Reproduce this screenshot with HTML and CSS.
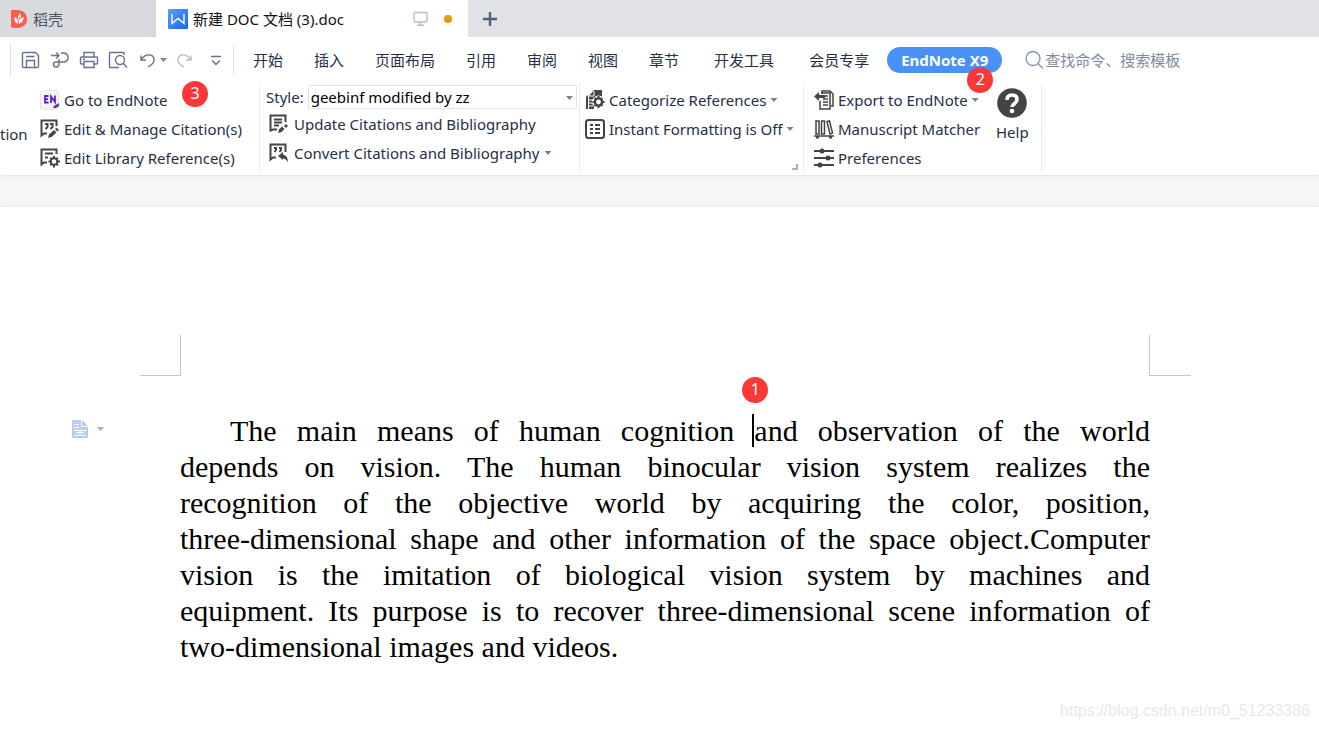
FILE: index.html
```html
<!DOCTYPE html>
<html lang="zh-CN">
<head>
<meta charset="utf-8">
<title>新建 DOC 文档 (3).doc</title>
<link rel="stylesheet" href="styles.css">
</head>
<body>
<div class="app">
<header class="tabbar">
  <button class="tab home-tab">
    <svg width="16" height="18" viewBox="0 0 16 18"><path d="M0 0h7q9 1 9 9t-9 9H2q-2 0-2-2z" fill="#ff5c4c"/><path d="M7 14C3 12 3 8 4 7q2 1 3 4Q6 7 9 3q2 3 0 7 1-2 4-3-1 6-6 7z" fill="#fff"/><path d="M7 14q0-4 2-7" stroke="#ff5c4c" fill="none"/></svg>
    稻壳
  </button>
  <div class="tab doc-tab">
    <svg width="20" height="20" viewBox="0 0 20 20"><defs><linearGradient id="w" x1="0" y1="0" x2="1" y2="1"><stop offset="0" stop-color="#5a9cff"/><stop offset="1" stop-color="#1768e8"/></linearGradient></defs><rect width="20" height="20" rx="1" fill="url(#w)"/><path d="M4 5v9.500l6-5 6 5V5" fill="none" stroke="#fff" stroke-width="1.400"/></svg>
    <span class="doc-name">新建 DOC 文档 (3).doc</span>
    <svg width="16" height="16" viewBox="0 0 16 16" fill="none" stroke="#b4bccf" stroke-width="1.400"><rect x="1" y="1.500" width="13" height="9.500" rx="1"/><path d="M7.500 11v3M4 14.300h7"/></svg>
    <span class="dirty-dot"></span>
  </div>
  <button class="new-tab" aria-label="新建"><svg width="16" height="16" viewBox="0 0 16 16"><path d="M8 1v14M1 8h14" stroke="#525f80" stroke-width="2.400"/></svg></button>
</header>

<nav class="menubar">
  <div class="quick">
    <button aria-label="保存"><svg width="20" height="20" viewBox="0 0 20 20"><path d="M1.500 3.500q0-1 1-1h12l3 3v11q0 1-1 1h-14q-1 0-1-1zM5.500 17v-6.500h8V17M5 6.500h8.500"/></svg></button>
    <button aria-label="输出"><svg width="20" height="20" viewBox="0 0 20 20"><path d="M1 5.500h8M6 2.500l3 3-3 3M11 3h2q5 0 5 4.500T13 12H6q-2.500 0-2.500 2.500T6 17q3 0 3-3V9"/></svg></button>
    <button aria-label="打印"><svg width="20" height="20" viewBox="0 0 20 20"><path d="M5 7V2.500h10V7M5 14H2.500q-1 0-1-1V8q0-1 1-1h15q1 0 1 1v5q0 1-1 1H15M5 11.500h10v6H5zM4 9.300h2"/></svg></button>
    <button aria-label="打印预览"><svg width="20" height="20" viewBox="0 0 20 20"><path d="M16 5V2.500H2q-.5 0-.5.500v14q0 .5.500.5h9"/><circle cx="12" cy="10" r="4.500"/><path d="M15 13l4 4.500"/></svg></button>
    <button class="undo" aria-label="撤销"><svg width="17" height="20" viewBox="0 0 17 20"><path d="M2 5.500V10h5M2 10q4-6 9-5 4.500 1 4 5.500-.5 3.500-6 6.500"/></svg><i class="arrow"></i></button>
    <button class="dim" aria-label="恢复"><svg width="17" height="20" viewBox="0 0 17 20"><path d="M15 5.500V10h-5M15 10Q11 4 6 5q-4.500 1-4 5.500.5 3.500 6 6.500"/></svg></button>
    <button class="more" aria-label="更多"><svg width="12" height="20" viewBox="0 0 12 20"><path d="M1 6.500h10M2 10.500l4 4 4-4"/></svg></button>
  </div>
  <div class="menus">
    <button>开始</button><button>插入</button><button>页面布局</button><button>引用</button><button>审阅</button><button>视图</button><button>章节</button><button class="wide">开发工具</button><button class="wide">会员专享</button>
  </div>
  <button class="active-menu">EndNote X9<span class="badge on-menu">2</span></button>
  <label class="search">
    <svg width="20" height="20" viewBox="0 0 20 20" fill="none" stroke="#8794b0" stroke-width="1.400"><circle cx="9" cy="8.500" r="7"/><path d="M14 13.500l5 5"/></svg>
    <input type="text" placeholder="查找命令、搜索模板" aria-label="查找命令、搜索模板">
  </label>
</nav>

<section class="ribbon">
  <span class="cut-label">tion</span>
  <div class="group cite">
    <button><svg width="20" height="20" viewBox="0 0 20 20"><rect x=".5" y=".5" width="18" height="19" rx="3" fill="#f5f5f7" stroke="#e3e3e8"/><path d="M8.500 6H5v6.500h3.500M5 9.200h3M11 13V6.500l4 5.500V5.500" fill="none" stroke="#5a21d6" stroke-width="1.800"/><path d="M13 18l1-2 5-3v3l-3 2z" fill="#5b2bb5"/></svg>Go to EndNote<span class="badge on-goto">3</span></button>
    <button><svg class="ico" width="20" height="20" viewBox="0 0 20 20"><path d="M7 14.500H4l-2.500 2v-15h15V7"/><path d="M5 5h2.500v3L5.500 10M10 5h2.500v3l-2 2" stroke-width="2"/><path d="M8 19l1-3.500 5-4.500 2.500 2.500-5 4.500zM15 10l1.500-1.500L19 11l-1.500 1.500z" class="fill"/></svg>Edit &amp; Manage Citation(s)</button>
    <button><svg class="ico" width="20" height="20" viewBox="0 0 20 20"><path d="M7 14.500H4l-2.500 2v-15h15V6M5 5.500h8M5 9.500h3"/><circle cx="14" cy="13.500" r="3.300"/><path d="M14 8v2M14 17v2.500M8.500 13.500h2M17.500 13.500H20M10.200 9.700l1.300 1.300M16.500 16l1.400 1.400M17.800 9.700L16.500 11M11.500 16l-1.300 1.300"/></svg>Edit Library Reference(s)</button>
  </div>
  <div class="group biblio">
    <div class="style-row"><label for="style">Style:</label><span class="select-wrap"><select id="style"><option>geebinf modified by zz</option></select><i class="arrow"></i></span></div>
    <button><svg class="ico" width="20" height="20" viewBox="0 0 20 20"><path d="M8 15.500H4l-2.500 1v-15h15V8M5 5.500h8M5 8.500h8M5 11.500h5"/><path d="M9 19l1-3.500 3-3 2.500 2.500-3 3zM15 12l2-2 2 2-2 2z" class="fill"/></svg>Update Citations and Bibliography</button>
    <button><svg class="ico" width="20" height="20" viewBox="0 0 20 20"><path d="M7 14.500H4l-2.500 2v-15h15V9"/><path d="M5 5h2v2L5.500 9M10 5h2v2l-1.500 2"/><path d="M9 13l5-4v2.500q5 1 5 8-2-4-5-4V17z" class="fill"/></svg>Convert Citations and Bibliography<i class="arrow"></i></button>
  </div>
  <div class="group format">
    <button><svg class="ico" width="20" height="20" viewBox="0 0 20 20"><path d="M1 7l2-2v14H1zM4 6l5-6h8v8H9v11H4z" class="fill"/><path d="M4 6h5V1" stroke="#fff" stroke-width="1"/><path d="M4 10h4M4 13h4M4 16h4" stroke="#fff" stroke-width="1"/><circle cx="13.500" cy="12" r="6.500" fill="#fff" stroke="none"/><circle cx="13.500" cy="12" r="3.600" stroke-width="2.400"/><path d="M13.500 6v3M13.500 15v3M7.500 12h3M16.500 12h3M9.500 8l2 2M15.500 14l2 2M17.500 8l-2 2M11.500 14l-2 2"/></svg>Categorize References<i class="arrow"></i></button>
    <button><svg class="ico" width="20" height="20" viewBox="0 0 20 20"><rect x="1" y="1" width="18" height="18" rx="2.500"/><path d="M5 6h3M5 10h3M5 14h3M10 6h5M10 10h5M10 14h5"/></svg>Instant Formatting is Off<i class="arrow"></i></button>
    <svg class="launcher" width="6" height="6" viewBox="0 0 6 6"><path d="M5 0v5H0" fill="none" stroke="#a9b1c5" stroke-width="2"/></svg>
  </div>
  <div class="group tools">
    <div class="stack">
      <button><svg class="ico" width="20" height="20" viewBox="0 0 20 20"><path d="M8 4V1h8l3 3v12h-2M6 11v8h10V3H7" stroke-width="1.500"/><path d="M9 6h5M9 9h5M9 12h5M9 15h5" stroke-width="1.500"/><path d="M0 6.500L5 2v3h6v3H5v3z" class="fill"/></svg>Export to EndNote<i class="arrow"></i></button>
      <button><svg class="ico" width="20" height="20" viewBox="0 0 20 20"><path d="M2 2h3v13H2zM7.500 2h3v13h-3zM13 2.500l2.500-.5L18.500 14l-2.500 1zM0 17h20" stroke-width="1.500"/><path d="M2 17h3v2.500H2zM15 17h3v2.500h-3z" class="fill"/></svg>Manuscript Matcher</button>
      <button><svg class="ico" width="20" height="20" viewBox="0 0 20 20"><path d="M0 3h20M0 10h20M0 17h20"/><g class="fill"><circle cx="8" cy="3" r="2.500"/><circle cx="14" cy="10" r="2.500"/><circle cx="6" cy="17" r="2.500"/></g></svg>Preferences</button>
    </div>
    <button class="help"><svg width="30" height="30" viewBox="0 0 30 30"><circle cx="15" cy="15" r="14.800" fill="#444"/><path d="M10 12q0-5 5-5t5 4.500q0 2-2.500 4T15 19" fill="none" stroke="#fff" stroke-width="3.600"/><circle cx="15" cy="23" r="2.300" fill="#fff"/></svg>Help</button>
  </div>
</section>

<main class="workspace">
  <article class="page">
    <div class="crops"><span class="crop left"></span><span class="crop right"></span></div>
    <div class="body">
      <button class="para-tool" aria-label="段落"><svg width="16" height="18" viewBox="0 0 16 18"><path d="M0 0h10l6 6v12H0z" fill="#b9cdea"/><path d="M9.500 0v6.500H16M2 4.500h5M2 7.500h5M2 10.500h12M4 12.500h8M2 15.500h5M9 15.500h5M8 11v5" stroke="#fff" fill="none"/></svg><i class="arrow"></i></button>
      <p class="text">
        <span class="line first">The main means of human cognition <span class="caret-at"><span class="badge on-caret">1</span>and</span> observation of the world</span>
        <span class="line">depends on vision. The human binocular vision system realizes the</span>
        <span class="line">recognition of the objective world by acquiring the color, position,</span>
        <span class="line">three-dimensional shape and other information of the space object.Computer</span>
        <span class="line">vision is the imitation of biological vision system by machines and</span>
        <span class="line">equipment. Its purpose is to recover three-dimensional scene information of</span>
        <span class="line last">two-dimensional images and videos.</span>
      </p>
    </div>
    <footer class="watermark">https://blog.csdn.net/m0_51233386</footer>
  </article>
</main>
</div>
</body>
</html>
```
FILE: styles.css
```css
* { box-sizing: border-box; }
body { margin: 0; background: #fff; color: #262f45; font: 15px/20px "Noto Sans", "Noto Sans CJK SC", sans-serif; }
button, input, select { font: inherit; color: inherit; background: none; border: 0; padding: 0; margin: 0; }
button { white-space: nowrap; display: flex; align-items: center; }
svg { display: block; flex: none; }
.app { display: flex; flex-direction: column; min-height: 100vh; overflow: hidden; }
.arrow { flex: none; width: 7px; height: 4px; background: #77829c; clip-path: polygon(0 0, 100% 0, 50% 100%); }

.tabbar { display: flex; height: 37px; background: #e1e2e6; }
.tab { display: flex; align-items: center; }
.home-tab { width: 156px; padding-left: 11px; gap: 6px; background: #d8dadd; border-right: 3px solid #d3d5d9; color: #4a5264; }
.doc-tab { width: 312px; padding: 0 16px 0 12px; gap: 5px; background: #fff; color: #111; }
.doc-name { flex: 1; white-space: nowrap; }
.dirty-dot { width: 8px; height: 8px; border-radius: 50%; background: #e79a06; margin-left: 10px; }
.new-tab { padding-left: 14px; }

.menubar { position: relative; z-index: 1; display: flex; align-items: center; height: 46px; padding-left: 10px; background: #fff; white-space: nowrap; }
.quick { display: flex; align-items: center; height: 30px; width: 224px; padding-left: 10px; gap: 9px; border: solid #e0e1e6; border-width: 0 1px; }
.quick svg { fill: none; stroke: #69728a; stroke-width: 1.4; }
.undo { gap: 4px; margin-left: 2px; }
.dim { opacity: .45; }
.more { margin-left: 8px; }
.menus { display: flex; gap: 31px; padding-left: 19px; }
.wide { margin-left: 4px; }
.active-menu { position: relative; height: 26px; padding: 0 14px; margin-left: 18px; border-radius: 13px; background: #4991f6; color: #fff; font-weight: 700; }
.search { flex: 1; display: flex; align-items: center; gap: 1px; margin-left: 22px; }
.search input { flex: 1; }
.search input::placeholder { color: #7f899e; opacity: 1; }

.badge { position: absolute; width: 26px; height: 26px; border-radius: 50%; background: #fb3838; color: #fff; font: 16px/25px "Noto Sans", sans-serif; text-align: center; text-align-last: center; text-indent: 0; }
.on-menu { right: 9px; top: 20px; }
.on-goto { left: 142px; top: -9px; z-index: 1; }
.on-caret { left: -12px; top: -37px; }

.ribbon { position: relative; display: flex; height: 92px; padding-bottom: 4px; white-space: nowrap; box-shadow: 0 0 3px #d0d2d7; }
.ico { fill: none; stroke: #444; stroke-width: 2; }
.ico .fill { fill: #444; stroke: none; }
.cut-label { width: 40px; padding-top: 41px; }
.group { position: relative; display: flex; flex-direction: column; align-items: flex-start; gap: 9px; padding-top: 7px; border-right: 1px solid #ececf0; }
.group button { position: relative; height: 20px; gap: 4px; }
.cite { width: 220px; }
.biblio { width: 320px; padding: 2px 2px 0 6px; }
.biblio > button { gap: 5px; margin-left: 3px; }
.style-row { display: flex; align-items: center; gap: 4px; align-self: stretch; margin-bottom: -4px; }
.select-wrap { position: relative; flex: 1; display: flex; }
.select-wrap select { flex: 1; height: 24px; padding: 0 2px; border: 1px solid #dfe1e8; border-radius: 2px; color: #000; appearance: none; }
.select-wrap .arrow { position: absolute; right: 4px; top: 11px; }
.format { width: 224px; padding-left: 5px; }
.launcher { position: absolute; right: 5px; bottom: 1px; }
.tools { width: 238px; flex-direction: row; padding-left: 10px; }
.stack { display: flex; flex-direction: column; gap: 9px; width: 171px; }
.group .help { flex-direction: column; gap: 4px; height: auto; margin: -2px 0 0 2px; }

.workspace { flex: 1; display: flex; padding-top: 32px; background: #f5f6f8; }
.page { flex: 1; display: flex; flex-direction: column; background: #fff; box-shadow: 0 0 4px #dcdee2; }
.crops { display: flex; justify-content: space-between; padding: 128px 128px 0 140px; }
.crop { width: 41px; height: 41px; border-bottom: 1px solid #c6c6c6; }
.left { border-right: 1px solid #c6c6c6; }
.right { width: 42px; border-left: 1px solid #c6c6c6; }
.body { display: flex; align-items: flex-start; padding: 37px 169px 0 72px; }
.para-tool { width: 108px; gap: 9px; margin-top: 7px; }
.para-tool .arrow { background: #aaa; }
.text { flex: 1; margin: 0; color: #000; font: 30px/36px "Liberation Serif", serif; }
.line { display: block; text-align-last: justify; white-space: nowrap; }
.first { text-indent: 50px; }
.last { text-align-last: left; }
.caret-at { position: relative; box-shadow: -2px 0 #000; }
.watermark { margin: auto 9px 8px 0; text-align: right; color: #e8e8e8; font: 16px/20px "Liberation Sans", sans-serif; }
```
